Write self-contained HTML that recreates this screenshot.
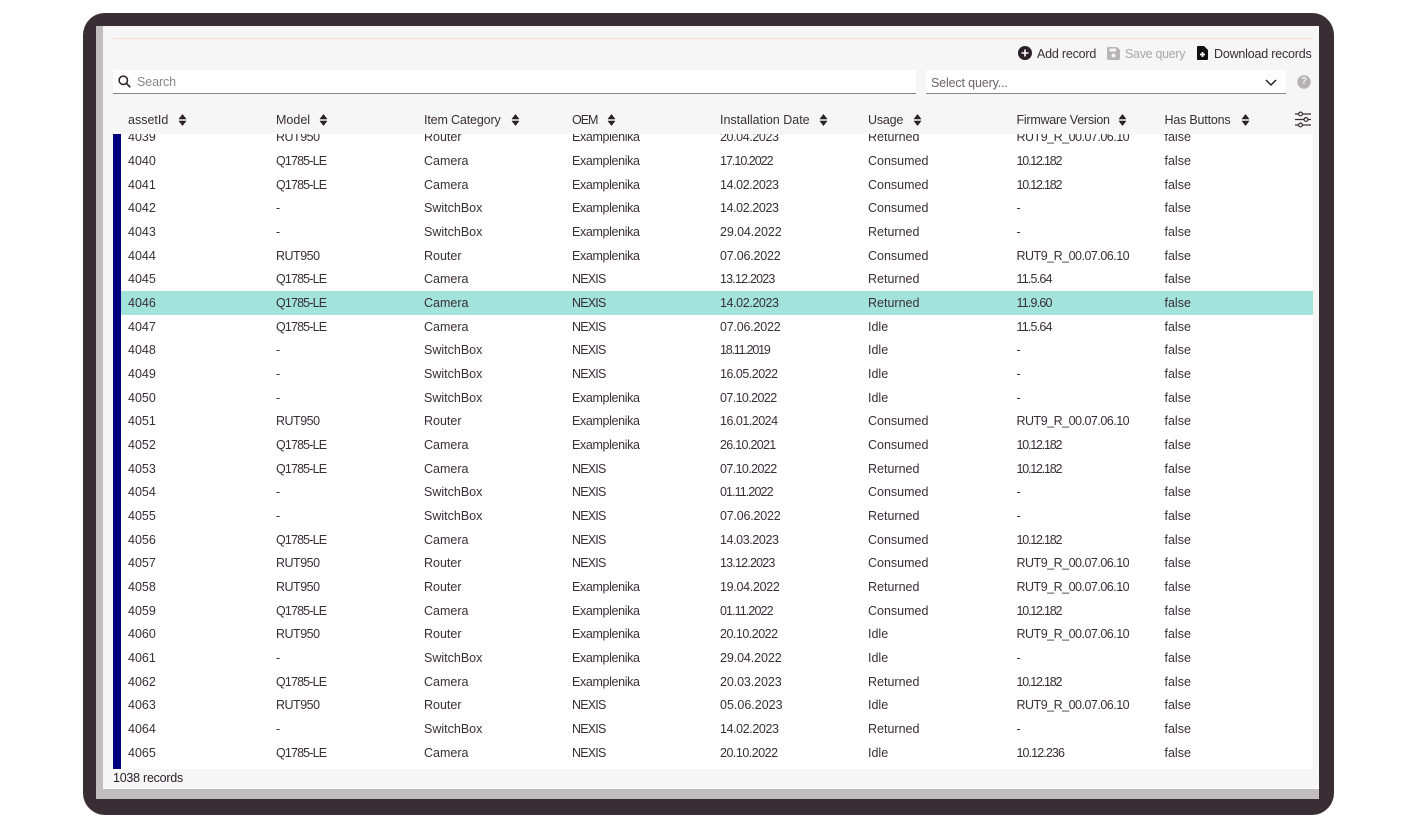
<!DOCTYPE html>
<html><head><meta charset="utf-8">
<style>
html,body{margin:0;padding:0;background:#fff}
body{width:1416px;height:828px;position:relative;overflow:hidden;font-family:"Liberation Sans",sans-serif;font-size:12.5px;color:#3a2e35}
.a{position:absolute;white-space:nowrap}
#frame{left:83px;top:13px;width:1251px;height:802px;background:#3a2e35;border-radius:22px}
#gray{left:96px;top:26px;width:1223px;height:773px;background:#c1bcbe}
#panel{left:103px;top:26px;width:1216px;height:762px;background:#f6f6f6;border-bottom:1px solid #fff}
#line{left:113px;top:38px;width:1200px;height:1px;background:#fbd9d3}
#search{left:113px;top:70px;width:803px;height:23px;background:#fff;border-bottom:1px solid #8a8386}
#query{left:926px;top:70px;width:360px;height:23px;background:#fff;border-bottom:1px solid #8a8386}
#table{left:113px;top:134px;width:1200px;height:635px;background:#fff;overflow:hidden}
#bar{position:absolute;left:0;top:0;width:8px;height:635px;background:#00007f}
#rows{position:absolute;left:0;top:-8.7px;width:1200px}
.r{position:relative;height:23.68px;line-height:23.68px}
.r span{position:absolute;top:1px}
.r span:nth-child(1){left:15px}
.r span:nth-child(2){left:163px}
.r span:nth-child(3){left:311px}
.r span:nth-child(4){left:459px}
.r span:nth-child(5){left:607px}
.r span:nth-child(6){left:755px}
.r span:nth-child(7){left:903.5px}
.r span:nth-child(8){left:1051.5px}
.hl{background:#a2e3dc;margin-left:8px;width:1192px}
.hl span{margin-left:-8px}
.h{position:absolute;top:113px;line-height:15px;white-space:nowrap}
.sort{position:absolute;top:113px;margin-left:-.5px}
.q{letter-spacing:-.85px}.u{letter-spacing:-.5px}.e{letter-spacing:-.36px}.n{letter-spacing:-.8px}
.s1{letter-spacing:-.1px}.s2{letter-spacing:-.2px}.s3{letter-spacing:-.3px}.s4{letter-spacing:-.4px}.s5{letter-spacing:-.5px}.s6{letter-spacing:-.6px}.s7{letter-spacing:-.7px}.s8{letter-spacing:-.8px}.s9{letter-spacing:-.9px}.s10{letter-spacing:-1px}.s12{letter-spacing:-1.2px}
</style></head><body>
<div class="a" id="frame"></div>
<div class="a" id="gray"></div>
<div class="a" id="panel"></div>
<div class="a" id="line"></div>

<svg class="a" style="left:1018px;top:46px" width="14" height="14" viewBox="0 0 14 14"><circle cx="7" cy="7" r="7" fill="#2b1f28"/><path d="M7 3.5v7M3.5 7h7" stroke="#fff" stroke-width="1.6"/></svg>
<div class="a" style="left:1037px;top:47px;line-height:15px;letter-spacing:-.2px">Add record</div>
<svg class="a" style="left:1107px;top:47px" width="13" height="13" viewBox="0 0 13 13"><path d="M1.5 0H10l3 3v8.500a1.500 1.500 0 0 1-1.500 1.500h-10A1.500 1.500 0 0 1 0 11.500v-10A1.500 1.500 0 0 1 1.500 0z" fill="#b9b5b7"/><rect x="2.500" y="1.500" width="6.500" height="3" fill="#f6f6f6"/><circle cx="6.500" cy="8.500" r="2" fill="#f6f6f6"/></svg>
<div class="a" style="left:1125px;top:47px;line-height:15px;color:#a9a5a7;letter-spacing:-.3px">Save query</div>
<svg class="a" style="left:1197px;top:46px" width="11" height="14" viewBox="0 0 11 14"><path d="M1 0h6l4 4v9a1 1 0 0 1-1 1H1a1 1 0 0 1-1-1V1a1 1 0 0 1 1-1z" fill="#111"/><path d="M5.500 6v5M3 8.500h5" stroke="#fff" stroke-width="1.700" fill="none"/></svg>
<div class="a" style="left:1214px;top:47px;line-height:15px;letter-spacing:-.2px">Download records</div>

<div class="a" id="search"></div>
<svg class="a" style="left:118px;top:75px" width="13" height="13" viewBox="0 0 13 13"><circle cx="5.300" cy="5.300" r="4.200" fill="none" stroke="#2b1f28" stroke-width="1.500"/><path d="M8.500 8.500L12.300 12.300" stroke="#2b1f28" stroke-width="1.600"/></svg>
<div class="a" style="left:137px;top:74.500px;line-height:15px;color:#8b8588;letter-spacing:-.1px">Search</div>
<div class="a" id="query"></div>
<div class="a" style="left:931px;top:75.500px;line-height:15px;color:#6b6367;letter-spacing:-.15px">Select query...</div>
<svg class="a" style="left:1265px;top:79px" width="12" height="8" viewBox="0 0 12 8"><path d="M1 1l5 5 5-5" fill="none" stroke="#2b1f28" stroke-width="1.500"/></svg>
<svg class="a" style="left:1297px;top:75px" width="14" height="14" viewBox="0 0 14 14"><circle cx="7" cy="7" r="6.700" fill="#b5b0b2"/></svg>
<div class="a" style="left:1297px;top:75px;width:14px;text-align:center;line-height:14px;font-size:10px;font-weight:bold;color:#f6f6f6">?</div>

<div class="h" style="left:128px">assetId</div>
<div class="h" style="left:276px">Model</div>
<div class="h" style="left:424px;letter-spacing:-.15px">Item Category</div>
<div class="h" style="left:572px;letter-spacing:-1px">OEM</div>
<div class="h" style="left:720px">Installation Date</div>
<div class="h" style="left:868px;letter-spacing:-.2px">Usage</div>
<div class="h" style="left:1016.500px;letter-spacing:-.25px">Firmware Version</div>
<div class="h" style="left:1164.500px;letter-spacing:-.2px">Has Buttons</div>
<svg class="sort" style="left:178px" width="9" height="14" viewBox="0 0 9 14"><path d="M4.500 1.500L8 6H1zM4.500 12.500L1 8h7z" fill="#2b1f28" stroke="#2b1f28" stroke-width=".6" stroke-linejoin="round"/></svg>
<svg class="sort" style="left:319px" width="9" height="14" viewBox="0 0 9 14"><path d="M4.500 1.500L8 6H1zM4.500 12.500L1 8h7z" fill="#2b1f28" stroke="#2b1f28" stroke-width=".6" stroke-linejoin="round"/></svg>
<svg class="sort" style="left:511px" width="9" height="14" viewBox="0 0 9 14"><path d="M4.500 1.500L8 6H1zM4.500 12.500L1 8h7z" fill="#2b1f28" stroke="#2b1f28" stroke-width=".6" stroke-linejoin="round"/></svg>
<svg class="sort" style="left:607px" width="9" height="14" viewBox="0 0 9 14"><path d="M4.500 1.500L8 6H1zM4.500 12.500L1 8h7z" fill="#2b1f28" stroke="#2b1f28" stroke-width=".6" stroke-linejoin="round"/></svg>
<svg class="sort" style="left:819px" width="9" height="14" viewBox="0 0 9 14"><path d="M4.500 1.500L8 6H1zM4.500 12.500L1 8h7z" fill="#2b1f28" stroke="#2b1f28" stroke-width=".6" stroke-linejoin="round"/></svg>
<svg class="sort" style="left:913px" width="9" height="14" viewBox="0 0 9 14"><path d="M4.500 1.500L8 6H1zM4.500 12.500L1 8h7z" fill="#2b1f28" stroke="#2b1f28" stroke-width=".6" stroke-linejoin="round"/></svg>
<svg class="sort" style="left:1118px" width="9" height="14" viewBox="0 0 9 14"><path d="M4.500 1.500L8 6H1zM4.500 12.500L1 8h7z" fill="#2b1f28" stroke="#2b1f28" stroke-width=".6" stroke-linejoin="round"/></svg>
<svg class="sort" style="left:1241px" width="9" height="14" viewBox="0 0 9 14"><path d="M4.500 1.500L8 6H1zM4.500 12.500L1 8h7z" fill="#2b1f28" stroke="#2b1f28" stroke-width=".6" stroke-linejoin="round"/></svg>
<svg class="a" style="left:1294px;top:111px" width="18" height="17" viewBox="0 0 18 17" fill="none" stroke="#3a2e35" stroke-width="1.200"><path d="M1 3h16M1 8.500h16M1 14h16"/><circle cx="6.500" cy="3" r="1.900" fill="#f6f6f6"/><circle cx="12" cy="8.500" r="1.900" fill="#f6f6f6"/><circle cx="6.500" cy="14" r="1.900" fill="#f6f6f6"/></svg>

<div class="a" id="table">
<div id="rows">
<div class="r"><span>4039</span><span class="u">RUT950</span><span>Router</span><span class="e">Examplenika</span><span class="s4">20.04.2023</span><span>Returned</span><span class="s5">RUT9_R_00.07.06.10</span><span>false</span></div>
<div class="r"><span>4040</span><span class="q">Q1785-LE</span><span>Camera</span><span class="e">Examplenika</span><span class="s10">17.10.2022</span><span>Consumed</span><span class="s12">10.12.182</span><span>false</span></div>
<div class="r"><span>4041</span><span class="q">Q1785-LE</span><span>Camera</span><span class="e">Examplenika</span><span class="s4">14.02.2023</span><span>Consumed</span><span class="s12">10.12.182</span><span>false</span></div>
<div class="r"><span>4042</span><span>-</span><span>SwitchBox</span><span class="e">Examplenika</span><span class="s4">14.02.2023</span><span>Consumed</span><span>-</span><span>false</span></div>
<div class="r"><span>4043</span><span>-</span><span>SwitchBox</span><span class="e">Examplenika</span><span class="s1">29.04.2022</span><span>Returned</span><span>-</span><span>false</span></div>
<div class="r"><span>4044</span><span class="u">RUT950</span><span>Router</span><span class="e">Examplenika</span><span class="s2">07.06.2022</span><span>Consumed</span><span class="s5">RUT9_R_00.07.06.10</span><span>false</span></div>
<div class="r"><span>4045</span><span class="q">Q1785-LE</span><span>Camera</span><span class="n">NEXIS</span><span class="s8">13.12.2023</span><span>Returned</span><span class="s8">11.5.64</span><span>false</span></div>
<div class="r hl"><span>4046</span><span class="q">Q1785-LE</span><span>Camera</span><span class="n">NEXIS</span><span class="s4">14.02.2023</span><span>Returned</span><span class="s8">11.9.60</span><span>false</span></div>
<div class="r"><span>4047</span><span class="q">Q1785-LE</span><span>Camera</span><span class="n">NEXIS</span><span class="s2">07.06.2022</span><span>Idle</span><span class="s8">11.5.64</span><span>false</span></div>
<div class="r"><span>4048</span><span>-</span><span>SwitchBox</span><span class="n">NEXIS</span><span class="s12">18.11.2019</span><span>Idle</span><span>-</span><span>false</span></div>
<div class="r"><span>4049</span><span>-</span><span>SwitchBox</span><span class="n">NEXIS</span><span class="s5">16.05.2022</span><span>Idle</span><span>-</span><span>false</span></div>
<div class="r"><span>4050</span><span>-</span><span>SwitchBox</span><span class="e">Examplenika</span><span class="s6">07.10.2022</span><span>Idle</span><span>-</span><span>false</span></div>
<div class="r"><span>4051</span><span class="u">RUT950</span><span>Router</span><span class="e">Examplenika</span><span class="s5">16.01.2024</span><span>Consumed</span><span class="s5">RUT9_R_00.07.06.10</span><span>false</span></div>
<div class="r"><span>4052</span><span class="q">Q1785-LE</span><span>Camera</span><span class="e">Examplenika</span><span class="s7">26.10.2021</span><span>Consumed</span><span class="s12">10.12.182</span><span>false</span></div>
<div class="r"><span>4053</span><span class="q">Q1785-LE</span><span>Camera</span><span class="n">NEXIS</span><span class="s6">07.10.2022</span><span>Returned</span><span class="s12">10.12.182</span><span>false</span></div>
<div class="r"><span>4054</span><span>-</span><span>SwitchBox</span><span class="n">NEXIS</span><span class="s9">01.11.2022</span><span>Consumed</span><span>-</span><span>false</span></div>
<div class="r"><span>4055</span><span>-</span><span>SwitchBox</span><span class="n">NEXIS</span><span class="s2">07.06.2022</span><span>Returned</span><span>-</span><span>false</span></div>
<div class="r"><span>4056</span><span class="q">Q1785-LE</span><span>Camera</span><span class="n">NEXIS</span><span class="s4">14.03.2023</span><span>Consumed</span><span class="s12">10.12.182</span><span>false</span></div>
<div class="r"><span>4057</span><span class="u">RUT950</span><span>Router</span><span class="n">NEXIS</span><span class="s8">13.12.2023</span><span>Consumed</span><span class="s5">RUT9_R_00.07.06.10</span><span>false</span></div>
<div class="r"><span>4058</span><span class="u">RUT950</span><span>Router</span><span class="e">Examplenika</span><span class="s3">19.04.2022</span><span>Returned</span><span class="s5">RUT9_R_00.07.06.10</span><span>false</span></div>
<div class="r"><span>4059</span><span class="q">Q1785-LE</span><span>Camera</span><span class="e">Examplenika</span><span class="s9">01.11.2022</span><span>Consumed</span><span class="s12">10.12.182</span><span>false</span></div>
<div class="r"><span>4060</span><span class="u">RUT950</span><span>Router</span><span class="e">Examplenika</span><span class="s5">20.10.2022</span><span>Idle</span><span class="s5">RUT9_R_00.07.06.10</span><span>false</span></div>
<div class="r"><span>4061</span><span>-</span><span>SwitchBox</span><span class="e">Examplenika</span><span class="s1">29.04.2022</span><span>Idle</span><span>-</span><span>false</span></div>
<div class="r"><span>4062</span><span class="q">Q1785-LE</span><span>Camera</span><span class="e">Examplenika</span><span class="s1">20.03.2023</span><span>Returned</span><span class="s12">10.12.182</span><span>false</span></div>
<div class="r"><span>4063</span><span class="u">RUT950</span><span>Router</span><span class="n">NEXIS</span><span>05.06.2023</span><span>Idle</span><span class="s5">RUT9_R_00.07.06.10</span><span>false</span></div>
<div class="r"><span>4064</span><span>-</span><span>SwitchBox</span><span class="n">NEXIS</span><span class="s4">14.02.2023</span><span>Returned</span><span>-</span><span>false</span></div>
<div class="r"><span>4065</span><span class="q">Q1785-LE</span><span>Camera</span><span class="n">NEXIS</span><span class="s5">20.10.2022</span><span>Idle</span><span class="s9">10.12.236</span><span>false</span></div>
</div>
<div id="bar"></div>
</div>
<div class="a" style="left:113px;top:770.500px;line-height:15px;color:#2b1f28;letter-spacing:-.25px">1038 records</div>
</body></html>
